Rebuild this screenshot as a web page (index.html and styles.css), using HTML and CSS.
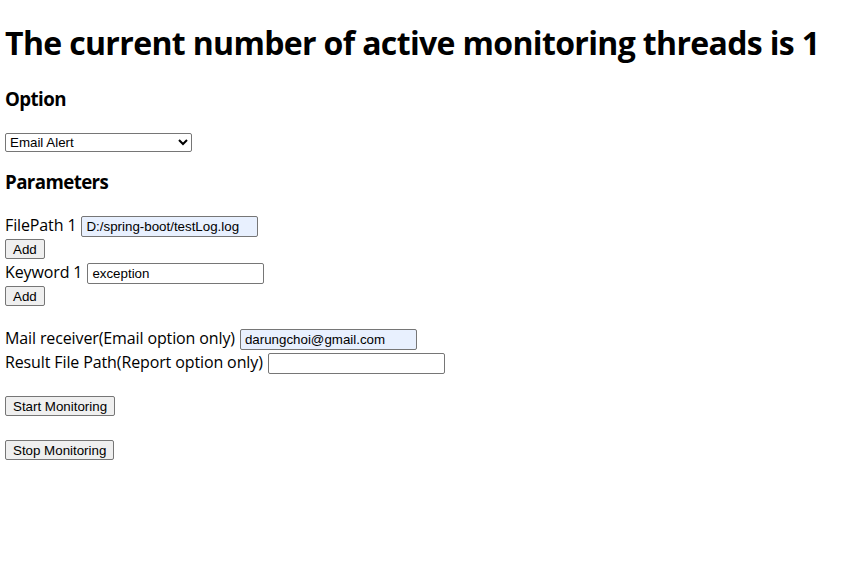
FILE: index.html
```html
<!DOCTYPE html>
<html>
<head>
<meta charset="utf-8">
<title>Monitoring</title>
<link rel="stylesheet" href="styles.css">
</head>
<body>
<h1 class="title">The current number of active monitoring threads is 1</h1>
<h3 class="section option-head">Option</h3>
<select class="select">
  <option>Email Alert</option>
  <option>Report</option>
</select>
<h3 class="section params-head">Parameters</h3>
<div class="row row-fp"><span class="label">FilePath 1</span><input class="field filled" type="text" value="D:/spring-boot/testLog.log"></div>
<button class="btn btn-add1" type="button">Add</button>
<div class="row row-kw"><span class="label">Keyword 1</span><input class="field" type="text" value="exception"></div>
<button class="btn btn-add2" type="button">Add</button>
<div class="row row-mail"><span class="label">Mail receiver(Email option only)</span><input class="field filled" type="text" value="darungchoi@gmail.com"></div>
<div class="row row-result"><span class="label">Result File Path(Report option only)</span><input class="field" type="text" value=""></div>
<button class="btn btn-start" type="button">Start Monitoring</button>
<button class="btn btn-stop" type="button">Stop Monitoring</button>
</body>
</html>
```
FILE: styles.css
```css
html, body {
  margin: 0;
  background: #ffffff;
}
body {
  padding: 23px 0 0 5px;
  font-family: "Open Sans", "Noto Sans CJK KR", sans-serif;
  color: #000;
  display: flex;
  flex-direction: column;
  align-items: flex-start;
}
.title {
  margin: 0;
  font-size: 32px;
  font-weight: 700;
  line-height: 40px;
  letter-spacing: -0.65px;
  white-space: nowrap;
}
.section {
  margin: 0;
  font-size: 18.72px;
  font-weight: 700;
  line-height: 24px;
  letter-spacing: -0.6px;
}
.option-head { margin-top: 24px; }
.params-head { margin-top: 18px; }
.select {
  margin: 22px 0 0 0;
  width: 187px;
  height: 19px;
  font-family: "Liberation Sans", Arial, sans-serif;
  font-size: 13.33px;
  border: 1px solid #767676;
  border-radius: 2px;
  background: #fff;
  color: #000;
  padding: 0;
}
.row {
  display: flex;
  align-items: center;
  height: 21px;
  gap: 5px;
}
.label {
  font-size: 16px;
  line-height: 16px;
  letter-spacing: -0.12px;
  margin-bottom: 3px;
  white-space: nowrap;
}
.field {
  box-sizing: border-box;
  width: 177px;
  height: 21px;
  margin: 0;
  padding: 1px 4px;
  font-family: "Liberation Sans", Arial, sans-serif;
  font-size: 13.33px;
  color: #000;
  border: 1px solid #767676;
  border-radius: 2px;
  background: #fff;
}
.field.filled { background: #e8f0fe; }
.btn {
  box-sizing: border-box;
  height: 20px;
  margin: 0;
  padding: 0 7px;
  font-family: "Liberation Sans", Arial, sans-serif;
  font-size: 13.33px;
  color: #000;
  background: #efefef;
  border: 1px solid #767676;
  border-radius: 2px;
}
.row-fp { margin-top: 22px; }
.btn-add1 { margin-top: 2px; }
.row-kw { margin-top: 4px; }
.btn-add2 { margin-top: 2px; }
.row-mail { margin-top: 23px; }
.row-result { margin-top: 3px; }
.btn-start { margin-top: 22px; }
.btn-stop { margin-top: 24px; }
```
